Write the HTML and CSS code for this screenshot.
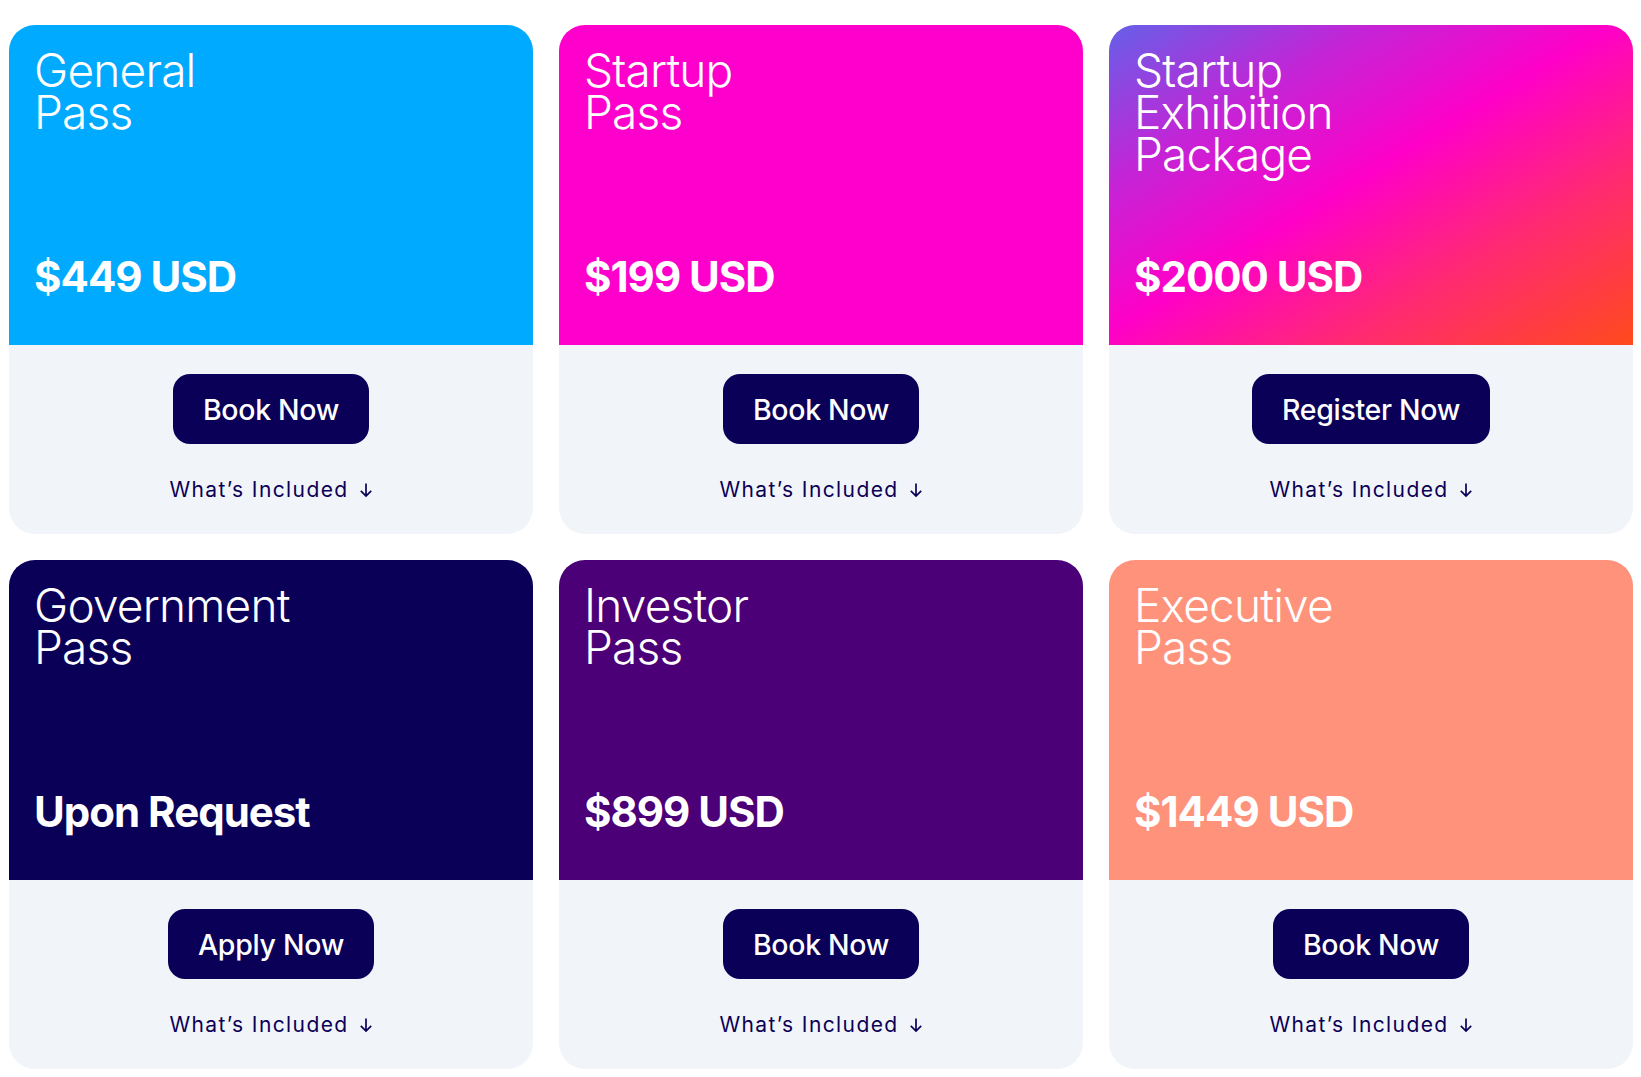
FILE: index.html
```html
<!DOCTYPE html>
<html lang="en">
<head>
<meta charset="utf-8">
<title>Passes</title>
<link rel="stylesheet" href="styles.css">
</head>
<body>
<main class="grid">
  <article class="card">
    <div class="head head-blue">
      <h2 class="title"><span class="line">General</span><span class="line">Pass</span></h2>
      <p class="price">$449 USD</p>
    </div>
    <div class="foot">
      <a class="btn" href="#">Book Now</a>
      <a class="more" href="#">What’s Included <svg class="arrow" viewBox="0 0 14 16" width="14" height="16"><path d="M7 1.5v12.5M1.8 8.8L7 14l5.2-5.2" fill="none" stroke="currentColor" stroke-width="1.7"/></svg></a>
    </div>
  </article>
  <article class="card">
    <div class="head head-magenta">
      <h2 class="title"><span class="line">Startup</span><span class="line">Pass</span></h2>
      <p class="price">$199 USD</p>
    </div>
    <div class="foot">
      <a class="btn" href="#">Book Now</a>
      <a class="more" href="#">What’s Included <svg class="arrow" viewBox="0 0 14 16" width="14" height="16"><path d="M7 1.5v12.5M1.8 8.8L7 14l5.2-5.2" fill="none" stroke="currentColor" stroke-width="1.7"/></svg></a>
    </div>
  </article>
  <article class="card">
    <div class="head head-gradient">
      <h2 class="title"><span class="line">Startup</span><span class="line">Exhibition</span><span class="line">Package</span></h2>
      <p class="price">$2000 USD</p>
    </div>
    <div class="foot">
      <a class="btn" href="#">Register Now</a>
      <a class="more" href="#">What’s Included <svg class="arrow" viewBox="0 0 14 16" width="14" height="16"><path d="M7 1.5v12.5M1.8 8.8L7 14l5.2-5.2" fill="none" stroke="currentColor" stroke-width="1.7"/></svg></a>
    </div>
  </article>
  <article class="card">
    <div class="head head-navy">
      <h2 class="title"><span class="line">Government</span><span class="line">Pass</span></h2>
      <p class="price">Upon Request</p>
    </div>
    <div class="foot">
      <a class="btn" href="#">Apply Now</a>
      <a class="more" href="#">What’s Included <svg class="arrow" viewBox="0 0 14 16" width="14" height="16"><path d="M7 1.5v12.5M1.8 8.8L7 14l5.2-5.2" fill="none" stroke="currentColor" stroke-width="1.7"/></svg></a>
    </div>
  </article>
  <article class="card">
    <div class="head head-purple">
      <h2 class="title"><span class="line">Investor</span><span class="line">Pass</span></h2>
      <p class="price">$899 USD</p>
    </div>
    <div class="foot">
      <a class="btn" href="#">Book Now</a>
      <a class="more" href="#">What’s Included <svg class="arrow" viewBox="0 0 14 16" width="14" height="16"><path d="M7 1.5v12.5M1.8 8.8L7 14l5.2-5.2" fill="none" stroke="currentColor" stroke-width="1.7"/></svg></a>
    </div>
  </article>
  <article class="card">
    <div class="head head-salmon">
      <h2 class="title"><span class="line">Executive</span><span class="line">Pass</span></h2>
      <p class="price">$1449 USD</p>
    </div>
    <div class="foot">
      <a class="btn" href="#">Book Now</a>
      <a class="more" href="#">What’s Included <svg class="arrow" viewBox="0 0 14 16" width="14" height="16"><path d="M7 1.5v12.5M1.8 8.8L7 14l5.2-5.2" fill="none" stroke="currentColor" stroke-width="1.7"/></svg></a>
    </div>
  </article>
</main>
</body>
</html>
```
FILE: styles.css
```css
* { box-sizing: border-box; }
html, body { margin: 0; padding: 0; background: #ffffff; }
body {
  font-family: "Inter", "Liberation Sans", sans-serif;
  color: #0b0056;
}
.grid {
  display: grid;
  grid-template-columns: repeat(3, 1fr);
  column-gap: 26px;
  row-gap: 26px;
  padding: 25px 8px 0 9px;
}
.card {
  height: 509px;
  border-radius: 26px;
  overflow: hidden;
  display: flex;
  flex-direction: column;
  background: #f1f5fa;
}
.head {
  height: 320px;
  padding: 24px 25px 44px 25px;
  display: flex;
  flex-direction: column;
  justify-content: space-between;
  color: #ffffff;
}
.head-blue { background: #00aaff; }
.head-magenta { background: #ff00cc; }
.head-navy { background: #0b0058; }
.head-purple { background: #4c0077; }
.head-salmon { background: #ff927b; }
.head-gradient {
  background: linear-gradient(to bottom right, #6560e8 0%, #c424d6 25%, #ff00c8 48%, #ff2a72 72%, #ff4a1c 100%);
}
.title {
  margin: 0;
  font-weight: 300;
  font-size: 46px;
  letter-spacing: -0.8px;
  display: flex;
  flex-direction: column;
}
.line {
  display: block;
  height: 42px;
  line-height: 42px;
}
.price {
  margin: 0;
  font-weight: 700;
  font-size: 42px;
  line-height: 48px;
  letter-spacing: -1px;
}
.foot {
  flex: 1;
  display: flex;
  flex-direction: column;
  align-items: center;
  padding-top: 29px;
}
.btn {
  display: inline-flex;
  align-items: center;
  justify-content: center;
  height: 70px;
  padding: 0 30px;
  border-radius: 17px;
  background: #0b0058;
  color: #ffffff;
  text-decoration: none;
  font-weight: 500;
  font-size: 28.5px;
  letter-spacing: -0.3px;
}
.more {
  margin-top: 33px;
  display: inline-flex;
  align-items: center;
  gap: 10px;
  color: #0b0056;
  text-decoration: none;
  font-size: 21px;
  letter-spacing: 1.4px;
  font-weight: 400;
}
.arrow { display: block; margin-top: 1px; }
```
